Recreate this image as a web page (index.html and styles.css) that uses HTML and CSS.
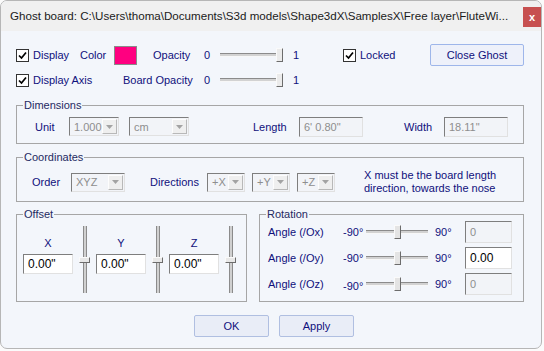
FILE: index.html
```html
<!DOCTYPE html>
<html>
<head>
<meta charset="utf-8">
<title>Ghost board</title>
<link rel="stylesheet" href="styles.css">
</head>
<body>
<div class="window">
  <div class="titlebar">
    <span class="title">Ghost board: C:\Users\thoma\Documents\S3d models\Shape3dX\SamplesX\Free layer\FluteWi...</span>
    <span class="close">x</span>
  </div>
  <div class="content">
    <div class="row row1">
      <span class="cb"><svg width="11" height="11" viewBox="0 0 11 11"><path d="M2 5.5 L4.5 8 L9 2.5" fill="none" stroke="#000" stroke-width="1.7"/></svg></span>
      <span class="lbl w-display">Display</span>
      <span class="lbl w-color">Color</span>
      <span class="swatch"></span>
      <span class="lbl w-opacity">Opacity</span>
      <span class="lbl w-zero">0</span>
      <div class="hslider top"><div class="track"></div><div class="thumb"></div></div>
      <span class="lbl w-one">1</span>
      <span class="cb"><svg width="11" height="11" viewBox="0 0 11 11"><path d="M2 5.5 L4.5 8 L9 2.5" fill="none" stroke="#000" stroke-width="1.7"/></svg></span>
      <span class="lbl w-locked">Locked</span>
      <button class="btn btn-ghost">Close Ghost</button>
    </div>
    <div class="row row2">
      <span class="cb"><svg width="11" height="11" viewBox="0 0 11 11"><path d="M2 5.5 L4.5 8 L9 2.5" fill="none" stroke="#000" stroke-width="1.7"/></svg></span>
      <span class="lbl w-axis">Display Axis</span>
      <span class="lbl w-board">Board Opacity</span>
      <span class="lbl w-zero">0</span>
      <div class="hslider top"><div class="track"></div><div class="thumb"></div></div>
      <span class="lbl w-one">1</span>
    </div>

    <fieldset class="group dims">
      <legend>Dimensions</legend>
      <div class="row grow">
        <span class="lbl w-unit">Unit</span>
        <div class="combo w-c1"><span class="val">1.000</span><span class="drop"><svg width="7" height="4" viewBox="0 0 7 4"><polygon points="0,0 7,0 3.5,4" fill="#a3a3a3"/></svg></span></div>
        <div class="combo w-c2"><span class="val">cm</span><span class="drop"><svg width="7" height="4" viewBox="0 0 7 4"><polygon points="0,0 7,0 3.5,4" fill="#a3a3a3"/></svg></span></div>
        <span class="lbl w-length">Length</span>
        <span class="tbox dis w-tb">6' 0.80"</span>
        <span class="lbl w-width">Width</span>
        <span class="tbox dis w-tb">18.11"</span>
      </div>
    </fieldset>

    <fieldset class="group coords">
      <legend>Coordinates</legend>
      <div class="row crow">
        <span class="lbl w-order">Order</span>
        <div class="combo w-c3"><span class="val">XYZ</span><span class="drop"><svg width="7" height="4" viewBox="0 0 7 4"><polygon points="0,0 7,0 3.5,4" fill="#a3a3a3"/></svg></span></div>
        <span class="lbl w-dir">Directions</span>
        <div class="combo w-c4"><span class="val">+X</span><span class="drop"><svg width="7" height="4" viewBox="0 0 7 4"><polygon points="0,0 7,0 3.5,4" fill="#a3a3a3"/></svg></span></div>
        <div class="combo w-c4 gap7"><span class="val">+Y</span><span class="drop"><svg width="7" height="4" viewBox="0 0 7 4"><polygon points="0,0 7,0 3.5,4" fill="#a3a3a3"/></svg></span></div>
        <div class="combo w-c4 gap7"><span class="val">+Z</span><span class="drop"><svg width="7" height="4" viewBox="0 0 7 4"><polygon points="0,0 7,0 3.5,4" fill="#a3a3a3"/></svg></span></div>
        <span class="note">X must be the board length<br>direction, towards the nose</span>
      </div>
    </fieldset>

    <div class="bottom">
      <fieldset class="group offset">
        <legend>Offset</legend>
        <div class="ocols">
          <div class="ocol"><span class="olbl">X</span><span class="tbox en">0.00"</span></div>
          <div class="vslider"><div class="vtrack"></div><div class="vthumb"></div></div>
          <div class="ocol"><span class="olbl">Y</span><span class="tbox en">0.00"</span></div>
          <div class="vslider"><div class="vtrack"></div><div class="vthumb"></div></div>
          <div class="ocol"><span class="olbl">Z</span><span class="tbox en">0.00"</span></div>
          <div class="vslider"><div class="vtrack"></div><div class="vthumb"></div></div>
        </div>
      </fieldset>
      <fieldset class="group rotation">
        <legend>Rotation</legend>
        <div class="rrow">
          <span class="lbl w-angle">Angle (/Ox)</span>
          <span class="lbl w-m90">-90°</span>
          <div class="hslider rot"><div class="track"></div><div class="thumb"></div></div>
          <span class="lbl w-p90">90°</span>
          <span class="tbox dis w-rt">0</span>
        </div>
        <div class="rrow">
          <span class="lbl w-angle">Angle (/Oy)</span>
          <span class="lbl w-m90">-90°</span>
          <div class="hslider rot"><div class="track"></div><div class="thumb"></div></div>
          <span class="lbl w-p90">90°</span>
          <span class="tbox en w-rt">0.00</span>
        </div>
        <div class="rrow">
          <span class="lbl w-angle">Angle (/Oz)</span>
          <span class="lbl w-m90 low">-90°</span>
          <div class="hslider rot"><div class="track"></div><div class="thumb"></div></div>
          <span class="lbl w-p90">90°</span>
          <span class="tbox dis w-rt">0</span>
        </div>
      </fieldset>
    </div>

    <div class="buttons">
      <button class="btn btn-dlg">OK</button>
      <button class="btn btn-dlg">Apply</button>
    </div>
  </div>
</div>
</body>
</html>
```

FILE: styles.css
```css
* { box-sizing: border-box; }

body {
  margin: 0;
  background: #fbfbfb;
  font-family: "Liberation Sans", Arial, sans-serif;
  font-size: 11px;
  color: #10107c;
}

.window {
  width: 542px;
  height: 349px;
  border: 1px solid #b6b6b6;
  border-radius: 7px;
  background: #f3f6fb;
  overflow: hidden;
  display: flex;
  flex-direction: column;
}

.titlebar {
  height: 30px;
  flex: none;
  background: #f0f0f0;
  display: flex;
  align-items: flex-start;
  padding-left: 9px;
}

.title {
  flex: 1;
  min-width: 0;
  white-space: nowrap;
  font-size: 11.6px;
  line-height: 14px;
  margin-top: 8px;
  color: #1b1b1b;
}

.close {
  flex: none;
  width: 18px;
  height: 20px;
  margin-top: 6px;
  background: #c75050;
  color: #fff;
  font-weight: bold;
  font-size: 11px;
  display: flex;
  align-items: center;
  justify-content: center;
}

.content {
  padding: 13px 17px 0 15px;
}

.row {
  display: flex;
  align-items: center;
}

.row1 { height: 22px; }
.row2 { height: 20px; margin-top: 4px; }

.lbl {
  flex: none;
  white-space: nowrap;
  line-height: 14px;
}

.cb {
  flex: none;
  width: 13px;
  height: 13px;
  border: 1px solid #333;
  background: #fff;
  margin-right: 4px;
  display: flex;
  align-items: center;
  justify-content: center;
}

.w-display { width: 47px; }
.w-color { width: 34px; }
.w-opacity { width: 51px; margin-left: 16px; }
.w-zero { width: 16px; }
.w-one { width: 50px; margin-left: 9px; }
.w-locked { width: 70px; }
.w-axis { width: 90px; }
.w-board { width: 81px; }

.swatch {
  flex: none;
  width: 23px;
  height: 19px;
  background: #ff0080;
  border: 1px solid #8a8a8a;
}

.hslider {
  flex: none;
  position: relative;
  height: 16px;
}

.hslider.top { width: 64px; }
.hslider.rot { width: 62px; }

.hslider .track {
  position: absolute;
  left: 0;
  top: 6px;
  height: 4px;
  background: #d2d2d2;
  border-top: 1px solid #8b8b8b;
  border-bottom: 1px solid #f7f7f7;
}

.hslider.top .track { right: 6px; }
.hslider.rot .track { right: 0; }

.hslider .thumb {
  position: absolute;
  background: #ebebeb;
  border: 1px solid;
  border-color: #fafafa #6c6c6c #6c6c6c #fafafa;
}

.hslider.top .thumb { left: 56px; top: 1px; width: 7px; height: 14px; }
.hslider.rot .thumb { left: 28px; top: 1px; width: 7px; height: 14px; background: #e4e4e4; }

.btn {
  font-family: "Liberation Sans", Arial, sans-serif;
  font-size: 11px;
  color: #10107c;
  height: 22px;
  padding: 0;
  border-radius: 2px;
  cursor: default;
}

.btn-ghost {
  flex: none;
  width: 94px;
  background: #eef1fa;
  border: 1px solid #9eb6ea;
}

.btn-dlg {
  width: 75px;
  background: #e9edf7;
  border: 1px solid #b0bfe1;
}

/* group boxes */
.group {
  margin: 0;
  padding: 0;
  border: 1px solid #a6a6a6;
  border-radius: 0;
  min-width: 0;
}

.group legend {
  margin-left: 6px;
  padding: 0 1px;
  line-height: 14px;
  color: #1f2a62;
}

.dims {
  margin-top: 8px;
  padding: 5px 0 7px 0;
}

.dims .grow { padding-left: 18px; }

.grow { height: 19px; }

.w-unit { width: 34px; }
.w-length { width: 46px; margin-left: 64px; }
.w-width { width: 40px; margin-left: 41px; }

.combo {
  flex: none;
  display: flex;
  align-items: center;
  height: 19px;
  border: 1px solid;
  border-color: #7e7e7e #e1e1e1 #e1e1e1 #7e7e7e;
  background: #f2f4f8;
  padding: 1px;
  color: #8e8e8e;
}

.combo .val {
  flex: 1;
  padding-left: 3px;
  line-height: 14px;
  white-space: nowrap;
}

.combo .drop {
  flex: none;
  width: 15px;
  height: 15px;
  background: #efefef;
  border: 1px solid;
  border-color: #fdfdfd #b8b8b8 #b8b8b8 #fdfdfd;
  display: flex;
  align-items: center;
  justify-content: center;
}

.w-c1 { width: 50px; }
.w-c2 { width: 60px; margin-left: 10px; }
.w-c3 { width: 54px; }
.w-c4 { width: 38px; }
.gap7 { margin-left: 7px; }

.tbox {
  flex: none;
  display: flex;
  align-items: center;
  height: 20px;
  border: 1px solid;
  border-color: #7e7e7e #e1e1e1 #e1e1e1 #7e7e7e;
  padding-left: 4px;
  line-height: 14px;
  white-space: nowrap;
}

.tbox.dis {
  background: #f2f4f8;
  color: #8e8e8e;
}

.tbox.en {
  background: #fff;
  color: #000;
  font-size: 12px;
}

.w-tb { width: 64px; }

.coords {
  margin-top: 6px;
  padding: 4px 0 5px 0;
}

.crow { height: 28px; padding-left: 15px; }

.w-order { width: 39px; }
.w-dir { width: 57px; margin-left: 25px; }

.note {
  margin-left: 29px;
  line-height: 13px;
}

.bottom {
  display: flex;
  gap: 12px;
  margin-top: 5px;
}

.offset {
  width: 231px;
  padding: 5px 0 8px 0;
}

.ocols {
  display: flex;
  padding-left: 6px;
}

.ocol {
  flex: none;
  width: 50px;
  display: flex;
  flex-direction: column;
  align-items: center;
  padding-top: 10px;
}

.olbl {
  line-height: 14px;
  height: 14px;
  margin-bottom: 4px;
}

.ocol .tbox { width: 50px; }

.vslider {
  flex: none;
  position: relative;
  width: 12px;
  height: 67px;
  margin: 0 6px 0 5px;
}

.vtrack {
  position: absolute;
  top: 0;
  bottom: 0;
  left: 5px;
  width: 4px;
  background: #d0d0d0;
  border-left: 1px solid #8b8b8b;
  border-right: 1px solid #8b8b8b;
}

.vthumb {
  position: absolute;
  left: 1px;
  top: 31px;
  width: 11px;
  height: 6px;
  background: #e8e8e8;
  border: 1px solid;
  border-color: #fafafa #6c6c6c #6c6c6c #fafafa;
}

.rotation {
  flex: 1;
  padding: 0 0 6px 0;
}

.rrow {
  display: flex;
  align-items: center;
  height: 22px;
  margin-top: 4px;
  padding-left: 8px;
}

.rrow:first-of-type { margin-top: 0; }

.w-angle { width: 75px; }
.w-m90 { width: 23px; }
.w-m90.low { padding-top: 4px; }
.w-p90 { width: 30px; margin-left: 7px; }
.w-rt { width: 47px; height: 22px; }

.buttons {
  display: flex;
  justify-content: center;
  gap: 10px;
  margin-top: 13px;
  padding-left: 8px;
}
```
